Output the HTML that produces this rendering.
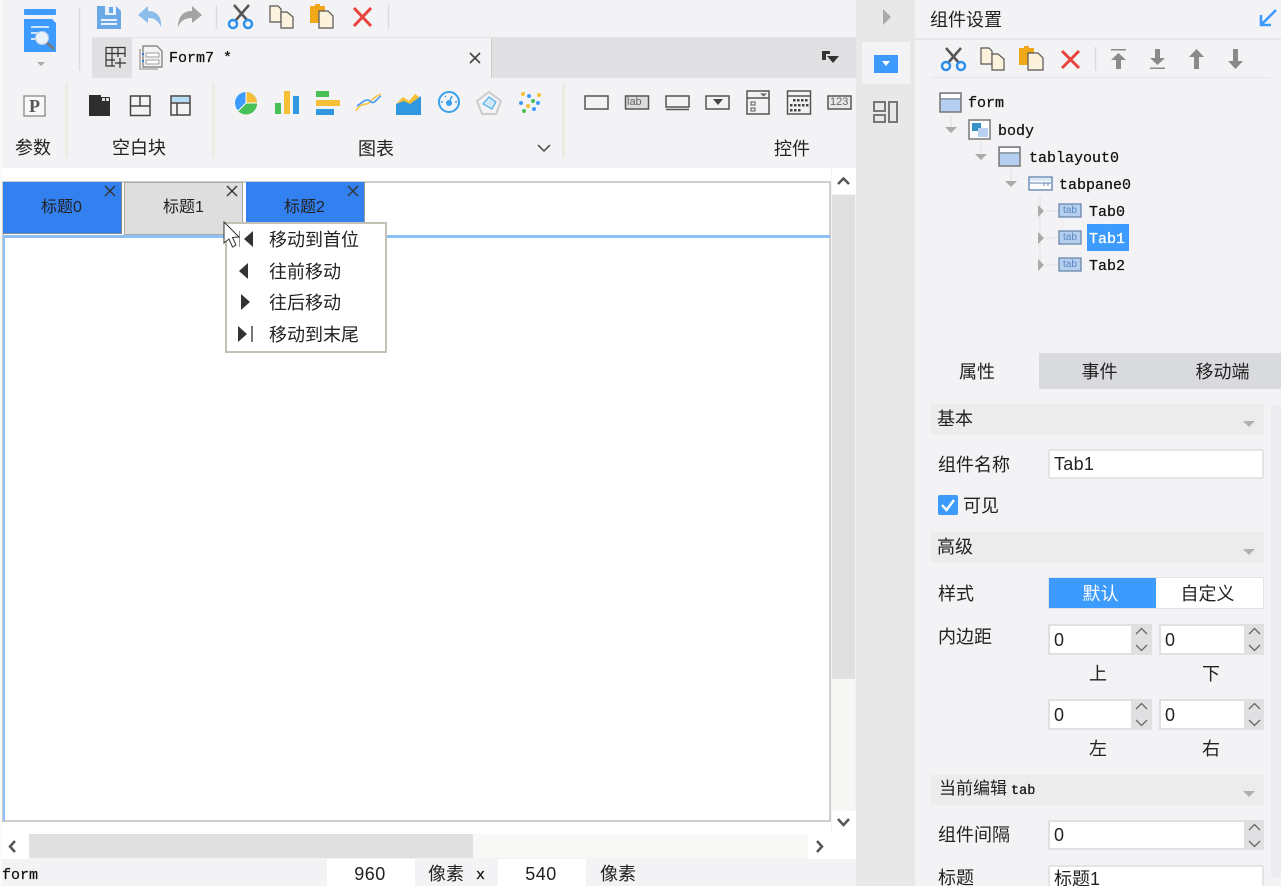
<!DOCTYPE html>
<html lang="zh"><head><meta charset="utf-8"><title>Form</title>
<style>
html,body{margin:0;padding:0;width:1281px;height:886px;overflow:hidden;background:#f3f3f6}
body{position:relative;font-family:"Liberation Sans","Noto Sans CJK SC",sans-serif;color:#222;filter:blur(.35px)}
.b{position:absolute;box-sizing:border-box}
.t{position:absolute;white-space:nowrap;font-size:18px;line-height:24px;color:#222}
.m{font-family:"Liberation Mono","Noto Sans CJK SC",monospace;font-size:15px;line-height:20px;color:#111;-webkit-text-stroke:.25px currentColor}
.c{text-align:center}
svg{position:absolute;left:0;top:0}
</style></head><body>
<!-- backgrounds -->
<div class="b" style="left:0;top:0;width:2px;height:886px;background:#fafafa"></div>
<div class="b" style="left:92px;top:37px;width:764px;height:1px;background:#e4e4e6"></div>
<div class="b" style="left:92px;top:38px;width:40px;height:40px;background:#e0e0e2"></div>
<div class="b" style="left:491px;top:38px;width:365px;height:40px;background:#e0e0e2;border-left:1px solid #ccc"></div>
<div class="b" style="left:2px;top:168px;width:829px;height:667px;background:#fff"></div>
<div class="b" style="left:2px;top:181px;width:829px;height:641px;border:2px solid #cfcfcb;background:#fff"></div>
<div class="b" style="left:3px;top:235px;width:827px;height:3px;background:#8cc0f7"></div>
<div class="b" style="left:3px;top:235px;width:2px;height:586px;background:#8cc0f7"></div>
<div class="b" style="left:3px;top:182px;width:119px;height:52px;background:#3381f0;border-right:1px solid #888;border-bottom:1px solid #888"></div>
<div class="b" style="left:124px;top:182px;width:119px;height:53px;background:#dedede;border:1px solid #aaa"></div>
<div class="b" style="left:246px;top:182px;width:119px;height:52px;background:#3381f0;border:1px solid #999;border-top:0;border-left:0"></div>
<!-- vertical scrollbar -->
<div class="b" style="left:832px;top:168px;width:24px;height:26px;background:#fff"></div>
<div class="b" style="left:832px;top:195px;width:23px;height:484px;background:#e0e0e0"></div>
<div class="b" style="left:832px;top:679px;width:23px;height:132px;background:#f7f7f5"></div>
<div class="b" style="left:832px;top:811px;width:24px;height:24px;background:#fff"></div>
<!-- horizontal scrollbar -->
<div class="b" style="left:2px;top:834px;width:27px;height:25px;background:#fff"></div>
<div class="b" style="left:29px;top:834px;width:444px;height:24px;background:#e0e0e0"></div>
<div class="b" style="left:473px;top:834px;width:335px;height:24px;background:#f8f8f6"></div>
<div class="b" style="left:808px;top:834px;width:48px;height:25px;background:#fff"></div>
<!-- status inputs -->
<div class="b" style="left:327px;top:859px;width:88px;height:27px;background:#fff"></div>
<div class="b" style="left:498px;top:859px;width:88px;height:27px;background:#fff"></div>
<!-- side rail -->
<div class="b" style="left:856px;top:0;width:59px;height:886px;background:#e8e8e8"></div>
<div class="b" style="left:862px;top:42px;width:48px;height:42px;background:#f3f3f6"></div>
<!-- right panel -->
<div class="b" style="left:915px;top:38px;width:366px;height:2px;background:#e6e6e8"></div>
<div class="b" style="left:931px;top:77px;width:339px;height:1px;background:#e6e6e8"></div>
<div class="b" style="left:1039px;top:353px;width:242px;height:36px;background:#d9dadd"></div>
<div class="b" style="left:915px;top:353px;width:124px;height:36px;background:#f3f3f6"></div>
<div class="b" style="left:1087px;top:224px;width:42px;height:27px;background:#3d9bfd"></div>
<div class="b" style="left:931px;top:404px;width:333px;height:30px;background:#ececec"></div>
<div class="b" style="left:931px;top:532px;width:333px;height:30px;background:#ececec"></div>
<div class="b" style="left:931px;top:775px;width:333px;height:30px;background:#ececec"></div>
<div class="b" style="left:1271px;top:405px;width:10px;height:472px;background:#ececee;border-radius:4px 0 0 4px"></div>
<div class="b" style="left:1048px;top:449px;width:216px;height:30px;background:#fff;border:2px solid #e4e4e6"></div>
<div class="b" style="left:938px;top:495px;width:20px;height:20px;background:#3d9bfd;border-radius:2px"></div>
<div class="b" style="left:1048px;top:577px;width:216px;height:32px;background:#fff;border:1px solid #e4e4e6"></div>
<div class="b" style="left:1049px;top:578px;width:107px;height:30px;background:#3d9bfd"></div>
<!-- spinners -->
<div class="b" style="left:1048px;top:624px;width:104px;height:31px;background:#e0e0e2"></div><div class="b" style="left:1050px;top:626px;width:81px;height:27px;background:#fff"></div>
<div class="b" style="left:1159px;top:624px;width:105px;height:31px;background:#e0e0e2"></div><div class="b" style="left:1161px;top:626px;width:83px;height:27px;background:#fff"></div>
<div class="b" style="left:1048px;top:699px;width:104px;height:31px;background:#e0e0e2"></div><div class="b" style="left:1050px;top:701px;width:81px;height:27px;background:#fff"></div>
<div class="b" style="left:1159px;top:699px;width:105px;height:31px;background:#e0e0e2"></div><div class="b" style="left:1161px;top:701px;width:83px;height:27px;background:#fff"></div>
<div class="b" style="left:1048px;top:820px;width:216px;height:30px;background:#e0e0e2"></div><div class="b" style="left:1050px;top:822px;width:194px;height:26px;background:#fff"></div>
<div class="b" style="left:1048px;top:865px;width:216px;height:30px;background:#fff;border:2px solid #e4e4e6"></div>
<!-- menu -->
<div class="b" style="left:225px;top:222px;width:162px;height:131px;background:#fff;border:2px solid #c4c0b4"></div>

<svg width="1281" height="886" viewBox="0 0 1281 886" fill="none">
<!-- app doc icon -->
<rect x="24" y="9" width="32" height="6" rx="1" fill="#3d9bfd"/>
<path d="M24 19H52L56 23V52H24Z" fill="#3d9bfd"/>
<path d="M31 27H49M31 33H39M31 39H37" stroke="#cfe6fe" stroke-width="2"/>
<circle cx="42" cy="38" r="6.5" fill="#e8f2fb" stroke="#bcd" stroke-width="1"/>
<path d="M47 43L54 49" stroke="#777" stroke-width="2.5"/>
<path d="M37 62H45L41 66Z" fill="#aaa"/>
<path d="M79.500 8V71M216.500 5V29M388.500 5V29" stroke="#dcdcde" stroke-width="1.500"/>
<!-- save -->
<path d="M97 6H116L121 11V29H97Z" fill="#6aa8e8"/><rect x="105" y="6" width="11" height="9" fill="#eaf2fb"/><rect x="109" y="7" width="4" height="6" fill="#6aa8e8"/><path d="M101 20H117M101 24H117" stroke="#eaf2fb" stroke-width="2"/>
<!-- undo/redo -->
<path d="M138 15L148 6V11C157 11 162 17 161 27C158 20 154 18 148 18V23Z" fill="#8dbdea"/>
<path d="M202 15L192 6V11C183 11 178 17 178 27C181 20 186 18 192 18V23Z" fill="#a3a3a3"/>
<!-- cut -->
<path d="M234 5L247 20M249 5L236 20" stroke="#555" stroke-width="2.500"/><circle cx="233" cy="24" r="4" stroke="#2f8fea" stroke-width="2.500"/><circle cx="248" cy="24" r="4" stroke="#2f8fea" stroke-width="2.500"/>
<!-- copy -->
<path d="M270 6H278L281 9V22H270Z" fill="#fdf3dc" stroke="#555" stroke-width="1.200"/><path d="M281 12H287L293 17V28H281Z" fill="#fdf3dc" stroke="#555" stroke-width="1.200"/>
<!-- paste -->
<path d="M310 6H315V4H320V6H325V23H310Z" fill="#f0a818"/><path d="M319 11H328L333 16V28H319Z" fill="#fdf3dc" stroke="#555" stroke-width="1.200"/>
<!-- delete -->
<path d="M354 8L371 26M371 8L354 26" stroke="#e8423c" stroke-width="3"/>
<!-- grid add -->
<path d="M106 47.500H125V57M106 47V66H115M106 53.500H125M112 47V66M118 47V57M106 60H115M120 58V68M115 63H126" stroke="#333" stroke-width="1.200"/>
<!-- form doc -->
<path d="M143 46H157L162 51V67H143Z" fill="#f4f4f4" stroke="#777" stroke-width="1.200"/><path d="M140 49V69H158" stroke="#888" stroke-width="1.100"/><rect x="146" y="53" width="13" height="4" fill="#fff" stroke="#888" stroke-width=".8"/><rect x="146" y="60" width="13" height="4" fill="#fff" stroke="#888" stroke-width=".8"/><rect x="142" y="53" width="2" height="2" fill="#2f7fd8"/><rect x="142" y="60" width="2" height="2" fill="#2f7fd8"/>
<path d="M470 53L480 63M480 53L470 63" stroke="#444" stroke-width="1.600"/>
<!-- tab list -->
<path d="M822 51H830V54H826V60H822Z" fill="#333"/><path d="M827 56H839L833 63Z" fill="#333"/>
<!-- ribbon seps -->
<path d="M66.500 83V158M213.500 83V158M563.500 83V158" stroke="#ece8dc" stroke-width="2"/>
<!-- P -->
<rect x="24" y="96" width="21" height="20" fill="#f8f8f8" stroke="#888" stroke-width="1.300"/>
<!-- blocks -->
<path d="M89 95H101V97H110V116H89Z" fill="#2e2e2e"/><rect x="102" y="98" width="3" height="3" fill="#ddd"/><rect x="106" y="98" width="3" height="3" fill="#ddd"/>
<path d="M130.500 96H150V115.500H130.500ZM130.500 106H150M140 96V106" stroke="#444" stroke-width="1.500"/>
<rect x="171" y="96" width="19" height="19" stroke="#444" stroke-width="1.500"/><rect x="172" y="97" width="17" height="5" fill="#b4dcf4"/><path d="M171 103H190M177 103V115" stroke="#444" stroke-width="1.500"/>
<!-- charts -->
<circle cx="246" cy="103" r="11" fill="#3d9bfd"/><path d="M246 103V92A11 11 0 0 1 257 103Z" fill="#f6c036"/><path d="M246 103H257A11 11 0 0 1 238 111Z" fill="#48c058"/><path d="M246 103V92M246 103H257M246 103L238 111" stroke="#fff" stroke-width="1"/>
<rect x="275" y="103" width="6" height="11" fill="#48c058"/><rect x="284" y="91" width="6" height="23" fill="#f6c036"/><rect x="293" y="96" width="6" height="18" fill="#2f98e0"/>
<rect x="316" y="91" width="13" height="6" fill="#48c058"/><rect x="316" y="100" width="24" height="6" fill="#f6c036"/><rect x="316" y="109" width="18" height="6" fill="#2f98e0"/>
<path d="M356 111C362 100 366 108 372 100C375 96 378 96 381 94" stroke="#f6c036" stroke-width="1.500"/><path d="M357 106C363 102 366 98 370 101C374 106 377 98 381 96" stroke="#3d9bfd" stroke-width="1.500"/>
<path d="M396 104L403 97L409 101L415 94L421 98V102L396 112Z" fill="#f6c036"/><path d="M396 104L404 101L410 104L421 96V115H396Z" fill="#2f98e0"/>
<circle cx="449" cy="102" r="10" stroke="#3aa0ea" stroke-width="2"/><circle cx="449" cy="103" r="3" fill="#3aa0ea"/><path d="M449 103L452 96M441 102H443M455 102H457M445 96L446 97" stroke="#3aa0ea" stroke-width="1.500"/>
<path d="M489 92L501 101L496 114H482L477 101Z" stroke="#ccc" stroke-width="2"/><path d="M489 97L496 102L492 109L483 104Z" fill="#cfe8f8" stroke="#5bb5ea" stroke-width="1.300"/>
<g fill="#f6c036"><circle cx="523" cy="94" r="2"/><circle cx="539" cy="95" r="2"/><circle cx="528" cy="106" r="2"/></g><g fill="#3d9bfd"><circle cx="529" cy="96" r="2"/><circle cx="521" cy="103" r="2"/><circle cx="538" cy="103" r="2"/><circle cx="534" cy="109" r="2"/></g><g fill="#48c058"><circle cx="533" cy="101" r="2"/><circle cx="524" cy="111" r="2"/></g>
<path d="M538 145L544 151L550 145" stroke="#444" stroke-width="1.500"/>
<!-- controls -->
<g stroke="#555" stroke-width="1.500"><rect x="585" y="96" width="23" height="13"/><rect x="625.500" y="96" width="23" height="13" fill="#ddd"/><rect x="666" y="96" width="23" height="11"/><path d="M666 109.500H689"/><rect x="706" y="96" width="23" height="13"/><rect x="747" y="91" width="22" height="23"/><path d="M747 98H769"/><rect x="787.500" y="91" width="23" height="23"/><path d="M788 96H810"/><rect x="828" y="96" width="23" height="13" fill="#e8e8e8"/></g>
<path d="M713 99H723L718 105Z" fill="#444"/><path d="M760 93.500H767L763.500 96.500Z" fill="#666"/><rect x="751" y="102" width="4" height="3" stroke="#555"/><rect x="751" y="108" width="4" height="3" stroke="#555"/>
<g fill="#444"><rect x="793" y="99" width="2.500" height="2.500"/><rect x="797" y="99" width="2.500" height="2.500"/><rect x="801" y="99" width="2.500" height="2.500"/><rect x="805" y="99" width="2.500" height="2.500"/><rect x="790" y="104" width="2.500" height="2.500"/><rect x="794" y="104" width="2.500" height="2.500"/><rect x="798" y="104" width="2.500" height="2.500"/><rect x="802" y="104" width="2.500" height="2.500"/><rect x="806" y="104" width="2.500" height="2.500"/><rect x="790" y="109" width="2.500" height="2.500"/><rect x="794" y="109" width="2.500" height="2.500"/><rect x="798" y="109" width="2.500" height="2.500"/></g>
<!-- tab closes -->
<path d="M105 186L115 196M115 186L105 196M227 186L237 196M237 186L227 196M348 186L358 196M358 186L348 196" stroke="#333" stroke-width="1.400"/>
<!-- menu icons -->
<path d="M253 231V247L244 239Z" fill="#333"/><path d="M239.500 231V247" stroke="#999" stroke-width="1"/>
<path d="M248 263V279L239 271Z" fill="#333"/>
<path d="M241 294V310L250 302Z" fill="#333"/>
<path d="M238 326V342L247 334Z" fill="#333"/><path d="M252 326V342" stroke="#333" stroke-width="1.300"/>
<!-- cursor -->
<path d="M224 222V243L229 239L232.500 247L236 245L232.500 237.500L239 237Z" fill="#fff" stroke="#333" stroke-width="1"/>
<!-- scroll arrows -->
<path d="M838 184L843.500 178.500L849 184" stroke="#555" stroke-width="2.500"/>
<path d="M838 819L843.500 825L849 819" stroke="#555" stroke-width="2.500"/>
<path d="M15 841L10 846.500L15 852" stroke="#555" stroke-width="2.500"/>
<path d="M817 841L822 846.500L817 852" stroke="#555" stroke-width="2.500"/>
<!-- side rail -->
<path d="M883 9L891 17L883 25Z" fill="#aaa"/>
<rect x="874" y="55" width="24" height="18" fill="#3d9bfd"/><path d="M882 61H890L886 66Z" fill="#fff"/>
<path d="M874 102H885V111H874ZM874 115H885V122H874ZM889 102H897V122H889Z" stroke="#777" stroke-width="2"/>
<!-- right title arrow -->
<path d="M1276 10L1262 24M1261 15V25H1271" stroke="#3d9bfd" stroke-width="2.600"/>
<!-- right toolbar -->
<path d="M946 48L959 63M961 48L948 63" stroke="#555" stroke-width="2.500"/><circle cx="946" cy="66" r="4" stroke="#2f8fea" stroke-width="2.500"/><circle cx="961" cy="66" r="4" stroke="#2f8fea" stroke-width="2.500"/>
<path d="M981 48H989L992 51V64H981Z" fill="#fdf3dc" stroke="#555" stroke-width="1.200"/><path d="M992 54H998L1004 59V70H992Z" fill="#fdf3dc" stroke="#555" stroke-width="1.200"/>
<path d="M1019 48H1024V46H1029V48H1034V65H1019Z" fill="#f0a818"/><path d="M1028 53H1038L1043 58V70H1028Z" fill="#fdf3dc" stroke="#555" stroke-width="1.200"/>
<path d="M1062 51L1079 68M1079 51L1062 68" stroke="#e8423c" stroke-width="3"/>
<path d="M1095.500 47V71" stroke="#dcdcde" stroke-width="1.500"/>
<g fill="#8a8a8a"><path d="M1111 49H1126V50.500H1111ZM1118.500 53L1126 60H1121V69H1116V60H1111Z"/><path d="M1150 67.500H1165V69H1150ZM1157.500 65L1150 58H1155V49H1160V58H1165Z"/><path d="M1196.500 49L1204 57H1199V69H1194V57H1189Z"/><path d="M1235.500 69L1243 61H1238V49H1233V61H1228Z"/></g>
<!-- tree lines -->
<path d="M951 115V126M981 142V153M1011 169V180M1040 196V265M1046 211H1058M1046 238H1058M1046 265H1058" stroke="#e2e2e2"/>
<g fill="#aaa"><path d="M945 127H957L951 133Z"/><path d="M975 154H987L981 160Z"/><path d="M1005 181H1017L1011 187Z"/><path d="M1038 205V217L1044 211Z"/><path d="M1038 232V244L1044 238Z"/><path d="M1038 259V271L1044 265Z"/></g>
<!-- tree icons -->
<rect x="940" y="93" width="21" height="19" fill="#b4cff0" stroke="#777" stroke-width="1.500"/><rect x="941" y="94" width="19" height="4" fill="#fff"/><path d="M940 99H961" stroke="#777"/>
<rect x="969" y="120" width="21" height="19" fill="#fff" stroke="#777" stroke-width="1.500"/><rect x="972" y="123" width="9" height="8" fill="#3890c8"/><rect x="978" y="128" width="10" height="9" fill="#b8d0f0"/>
<rect x="999" y="147" width="21" height="19" fill="#b4cff0" stroke="#777" stroke-width="1.500"/><rect x="1000" y="148" width="19" height="4" fill="#fff"/><path d="M999 153H1020" stroke="#777"/>
<rect x="1029" y="177" width="23" height="13" fill="#fff" stroke="#5b7fae" stroke-width="1.300"/><rect x="1030" y="178" width="21" height="3" fill="#dce8f8"/><path d="M1030 183H1044V186M1048 183V186M1044 183H1051" stroke="#5b7fae"/>
<g fill="#b4cff0" stroke="#6a86a8" stroke-width="1.300"><rect x="1059" y="204" width="22" height="13"/><rect x="1059" y="231" width="22" height="13"/><rect x="1059" y="258" width="22" height="13"/></g>
<!-- section arrows -->
<g fill="#b0b0b0"><path d="M1243 421H1255L1249 427Z"/><path d="M1243 549H1255L1249 555Z"/><path d="M1243 791H1255L1249 797Z"/></g>
<!-- checkbox -->
<path d="M942 505L946.500 510L954 500" stroke="#fff" stroke-width="2.400"/>
<!-- spinner arrows -->
<g stroke="#666" stroke-width="1.300"><path d="M1136 634L1141.500 628.500L1147 634M1136 645L1141.500 650.500L1147 645"/><path d="M1249 634L1254.500 628.500L1260 634M1249 645L1254.500 650.500L1260 645"/><path d="M1136 709L1141.500 703.500L1147 709M1136 720L1141.500 725.500L1147 720"/><path d="M1249 709L1254.500 703.500L1260 709M1249 720L1254.500 725.500L1260 720"/><path d="M1249 830L1254.500 824.500L1260 830M1249 841L1254.500 846.500L1260 841"/></g>
</svg>

<!-- top text -->
<div class="t m" style="left:169px;top:49px">Form7 *</div>
<div class="t" style="left:29px;top:95px;font-weight:bold;font-size:18px;color:#555;line-height:22px;font-family:'Liberation Serif',serif">P</div>
<div class="t" style="left:15px;top:136px">参数</div>
<div class="t" style="left:112px;top:136px">空白块</div>
<div class="t" style="left:358px;top:137px">图表</div>
<div class="t" style="left:774px;top:137px">控件</div>
<div class="t" style="left:627px;top:95px;font-size:11px;line-height:15px;color:#666">lab</div>
<div class="t" style="left:830px;top:95px;font-size:11px;line-height:15px;color:#666">123</div>
<!-- canvas tabs -->
<div class="t" style="left:41px;top:196px;font-size:16px">标题0</div>
<div class="t" style="left:163px;top:196px;font-size:16px">标题1</div>
<div class="t" style="left:284px;top:196px;font-size:16px">标题2</div>
<!-- menu -->
<div class="t" style="left:269px;top:228px">移动到首位</div>
<div class="t" style="left:269px;top:260px">往前移动</div>
<div class="t" style="left:269px;top:291px">往后移动</div>
<div class="t" style="left:269px;top:323px">移动到末尾</div>
<!-- status -->
<div class="t m" style="left:2px;top:866px">form</div>
<div class="t c" style="left:326px;top:862px;width:88px;letter-spacing:.5px">960</div>
<div class="t" style="left:428px;top:862px">像素</div>
<div class="t m" style="left:476px;top:866px">x</div>
<div class="t c" style="left:497px;top:862px;width:88px;letter-spacing:.5px">540</div>
<div class="t" style="left:600px;top:862px">像素</div>
<!-- right -->
<div class="t" style="left:930px;top:8px">组件设置</div>
<div class="t m" style="left:968px;top:94px">form</div>
<div class="t m" style="left:998px;top:122px">body</div>
<div class="t m" style="left:1029px;top:149px">tablayout0</div>
<div class="t m" style="left:1059px;top:176px">tabpane0</div>
<div class="t m" style="left:1089px;top:203px">Tab0</div>
<div class="t m" style="left:1089px;top:230px;color:#fff">Tab1</div>
<div class="t m" style="left:1089px;top:257px">Tab2</div>
<div class="t" style="left:1063px;top:204px;font-size:10px;line-height:14px;color:#5a86c0">tab</div>
<div class="t" style="left:1063px;top:231px;font-size:10px;line-height:14px;color:#5a86c0">tab</div>
<div class="t" style="left:1063px;top:258px;font-size:10px;line-height:14px;color:#5a86c0">tab</div>
<div class="t c" style="left:915px;top:360px;width:124px">属性</div>
<div class="t c" style="left:1039px;top:360px;width:121px">事件</div>
<div class="t c" style="left:1162px;top:360px;width:121px">移动端</div>
<div class="t" style="left:937px;top:407px">基本</div>
<div class="t" style="left:938px;top:453px">组件名称</div>
<div class="t" style="left:1054px;top:452px;font-size:18px;letter-spacing:.3px">Tab1</div>
<div class="t" style="left:963px;top:494px">可见</div>
<div class="t" style="left:937px;top:535px">高级</div>
<div class="t" style="left:938px;top:582px">样式</div>
<div class="t c" style="left:1047px;top:582px;width:107px;color:#fff">默认</div>
<div class="t c" style="left:1154px;top:582px;width:107px">自定义</div>
<div class="t" style="left:938px;top:625px">内边距</div>
<div class="t" style="left:1054px;top:628px">0</div>
<div class="t" style="left:1165px;top:628px">0</div>
<div class="t" style="left:1054px;top:703px">0</div>
<div class="t" style="left:1165px;top:703px">0</div>
<div class="t" style="left:1089px;top:662px">上</div>
<div class="t" style="left:1202px;top:662px">下</div>
<div class="t" style="left:1089px;top:737px">左</div>
<div class="t" style="left:1202px;top:737px">右</div>
<div class="t" style="left:939px;top:777px;font-size:17px">当前编辑<span class="m" style="font-size:13.500px;margin-left:4px">tab</span></div>
<div class="t" style="left:938px;top:823px">组件间隔</div>
<div class="t" style="left:1054px;top:823px">0</div>
<div class="t" style="left:938px;top:866px">标题</div>
<div class="t" style="left:1054px;top:867px">标题1</div>
</body></html>
